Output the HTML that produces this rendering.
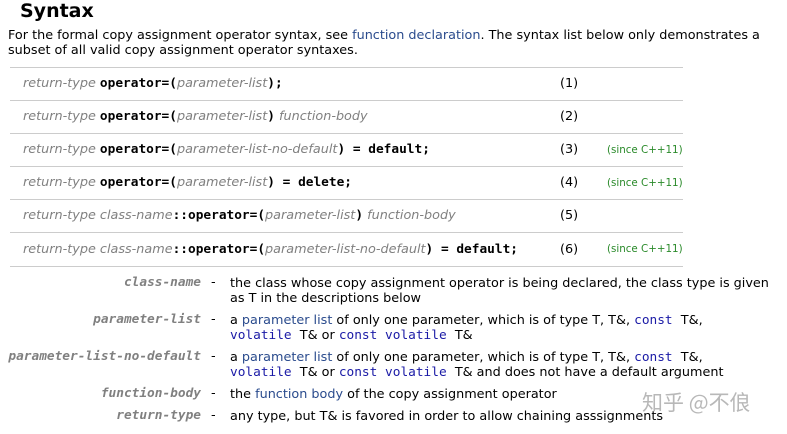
<!DOCTYPE html>
<html><head><meta charset="utf-8"><style>
body{margin:0;width:787px;height:434px;background:#fff;font-family:"DejaVu Sans","Liberation Sans",sans-serif;font-size:12.8px;color:#000;position:relative;overflow:hidden}
.a{position:absolute;white-space:nowrap}
.i{font-style:italic;color:#808080}
.m{font-family:"DejaVu Sans Mono","Liberation Mono",monospace;font-size:12.8px}
.b{font-weight:bold}
.l{color:#2a4b8d}
.k{color:#1a1aa6;font-family:"DejaVu Sans Mono","Liberation Mono",monospace}
.hr{position:absolute;left:10px;width:673px;height:1px;background:#ccc}
.g{color:#2a8a2a;font-size:10.3px}
.t{font-family:"DejaVu Sans Mono","Liberation Mono",monospace;font-style:italic;font-weight:bold;color:#808080;text-align:right;width:201px;left:0}
</style></head><body>
<div class="a b" style="left:20px;top:0px;font-size:19px">Syntax</div>
<div class="a" style="left:8px;top:28px">For the formal copy assignment operator syntax, see <span class="l">function declaration</span>. The syntax list below only demonstrates a</div>
<div class="a" style="left:8px;top:43px">subset of all valid copy assignment operator syntaxes.</div>

<div class="hr" style="top:67px"></div>
<div class="hr" style="top:100px"></div>
<div class="hr" style="top:133px"></div>
<div class="hr" style="top:166px"></div>
<div class="hr" style="top:199px"></div>
<div class="hr" style="top:232px"></div>
<div class="hr" style="top:266px"></div>

<div class="a" style="left:23px;top:76px"><span class="i">return-type</span> <span class="m b">operator=(</span><span class="i">parameter-list</span><span class="m b">);</span></div>
<div class="a" style="left:23px;top:109px"><span class="i">return-type</span> <span class="m b">operator=(</span><span class="i">parameter-list</span><span class="m b">)</span> <span class="i">function-body</span></div>
<div class="a" style="left:23px;top:142px"><span class="i">return-type</span> <span class="m b">operator=(</span><span class="i">parameter-list-no-default</span><span class="m b">) = default;</span></div>
<div class="a" style="left:23px;top:175px"><span class="i">return-type</span> <span class="m b">operator=(</span><span class="i">parameter-list</span><span class="m b">) = delete;</span></div>
<div class="a" style="left:23px;top:208px"><span class="i">return-type class-name</span><span class="m b">::operator=(</span><span class="i">parameter-list</span><span class="m b">)</span> <span class="i">function-body</span></div>
<div class="a" style="left:23px;top:242px"><span class="i">return-type class-name</span><span class="m b">::operator=(</span><span class="i">parameter-list-no-default</span><span class="m b">) = default;</span></div>

<div class="a" style="left:560px;top:76px">(1)</div>
<div class="a" style="left:560px;top:109px">(2)</div>
<div class="a" style="left:560px;top:142px">(3)</div>
<div class="a" style="left:560px;top:175px">(4)</div>
<div class="a" style="left:560px;top:208px">(5)</div>
<div class="a" style="left:560px;top:242px">(6)</div>
<div class="a g" style="left:607px;top:144px">(since C++11)</div>
<div class="a g" style="left:607px;top:177px">(since C++11)</div>
<div class="a g" style="left:607px;top:243px">(since C++11)</div>

<div class="a t" style="top:275px">class-name</div>
<div class="a t" style="top:312px">parameter-list</div>
<div class="a t" style="top:349px">parameter-list-no-default</div>
<div class="a t" style="top:386px">function-body</div>
<div class="a t" style="top:408px">return-type</div>
<div class="a" style="left:211px;top:275px">-</div>
<div class="a" style="left:211px;top:312px">-</div>
<div class="a" style="left:211px;top:349px">-</div>
<div class="a" style="left:211px;top:386px">-</div>
<div class="a" style="left:211px;top:408px">-</div>

<div class="a" style="left:230px;top:276px">the class whose copy assignment operator is being declared, the class type is given</div>
<div class="a" style="left:230px;top:291px">as T in the descriptions below</div>
<div class="a" style="left:230px;top:313px">a <span class="l">parameter list</span> of only one parameter, which is of type T, T&amp;, <span class="k">const</span> &nbsp;T&amp;,</div>
<div class="a" style="left:230px;top:328px"><span class="k">volatile</span> &nbsp;T&amp; or <span class="k">const volatile</span> &nbsp;T&amp;</div>
<div class="a" style="left:230px;top:350px">a <span class="l">parameter list</span> of only one parameter, which is of type T, T&amp;, <span class="k">const</span> &nbsp;T&amp;,</div>
<div class="a" style="left:230px;top:365px"><span class="k">volatile</span> &nbsp;T&amp; or <span class="k">const volatile</span> &nbsp;T&amp; and does not have a default argument</div>
<div class="a" style="left:230px;top:387px">the <span class="l">function body</span> of the copy assignment operator</div>
<div class="a" style="left:230px;top:409px">any type, but T&amp; is favored in order to allow chaining asssignments</div>

<div class="a" style="left:642px;top:387px;font-size:21px;color:#b8b8b8;font-family:'Noto Sans CJK SC',sans-serif">知乎 @不俍</div>
</body></html>
